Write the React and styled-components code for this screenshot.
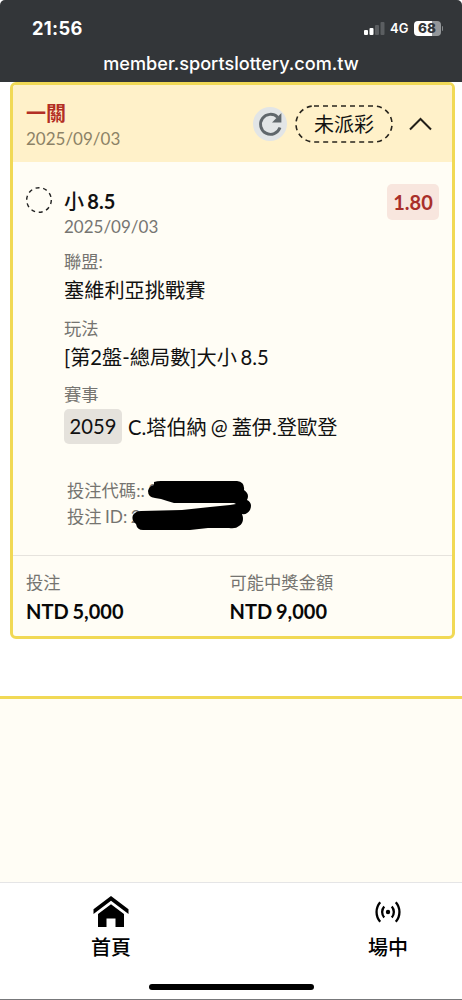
import styled, { createGlobalStyle } from "styled-components";

const GlobalStyle = createGlobalStyle`
  * {
    box-sizing: border-box;
  }
  body {
    margin: 0;
    background: #fff;
    font-family: Lato, "Noto Sans CJK TC", sans-serif;
    color: #111;
  }
`;

const Page = styled.div`
  width: 462px;
  height: 1000px;
  display: flex;
  flex-direction: column;
  overflow: hidden;
  background: #fff;
`;

const BrowserTop = styled.header`
  height: 82px;
  flex: none;
  padding-top: 16px;
  background: #333639;
  color: #fff;
  border-radius: 5px 5px 0 0;
  font-family: Inter, sans-serif;
`;

const StatusRow = styled.div`
  display: flex;
  align-items: center;
  justify-content: space-between;
  height: 24px;
  padding: 0 19px 0 32px;
`;

const Clock = styled.span`
  font-size: 18.3px;
  font-weight: 700;
  letter-spacing: 0.3px;
`;

const StatusIcons = styled.div`
  display: flex;
  align-items: center;
  gap: 5px;
  font-size: 13px;
  font-weight: 600;
`;

const Battery = styled.div`
  display: flex;
  align-items: center;
  gap: 1px;
  .cell {
    width: 27px;
    height: 15px;
    border-radius: 4px;
    background: linear-gradient(90deg, #fff 68%, #94979a 68%);
    color: #333639;
    font-size: 13.5px;
    font-weight: 800;
    line-height: 15px;
    text-align: center;
  }
  .tip {
    width: 1.5px;
    height: 5px;
    border-radius: 0 2px 2px 0;
    background: #85888a;
  }
`;

const Address = styled.div`
  height: 44px;
  line-height: 46px;
  text-align: center;
  font-size: 18.1px;
  font-weight: 500;
`;

const Card = styled.section`
  height: 557px;
  flex: none;
  margin: 0 7px 0 10px;
  border: 3px solid #f1d955;
  border-radius: 6px;
  background: #fffdf5;
  display: flex;
  flex-direction: column;
`;

const CardHeader = styled.div`
  height: 77px;
  padding: 15px 20px 0 13px;
  display: flex;
  justify-content: space-between;
  background: #fff1c9;
  border-radius: 3px 3px 0 0;
`;

const Title = styled.div`
  font-size: 20px;
  line-height: 26px;
  font-weight: 700;
  word-spacing: -1.5px;
  color: ${(p) => p.$color || "#111"};
  .size {
    font-weight: 500;
  }
`;

const DateText = styled.div`
  font-size: 17px;
  line-height: 26px;
  color: ${(p) => p.$color || "#767572"};
`;

const HeaderActions = styled.div`
  display: flex;
  align-items: center;
  height: 48px;
`;

const RefreshButton = styled.span`
  width: 34px;
  height: 34px;
  border-radius: 50%;
  background: #e2e5e6;
  display: flex;
  align-items: center;
  justify-content: center;
  margin-right: 8px;
`;

const StatusPill = styled.span`
  position: relative;
  width: 98px;
  height: 38px;
  line-height: 39px;
  text-align: center;
  font-size: 20px;
  margin-right: 16px;
  svg {
    position: absolute;
    inset: 0;
  }
`;

const Selection = styled.div`
  height: 393px;
  padding: 24px 13px 0;
  display: grid;
  grid-template-columns: 38px 1fr auto;
  align-items: start;
`;

const SelectionName = styled.div`
  padding-top: 2px;
`;

const Odds = styled.div`
  width: 52px;
  height: 36px;
  margin-top: -2px;
  border-radius: 5px;
  background: #f8e6de;
  color: #a92f2a;
  font-size: 20px;
  font-weight: 700;
  line-height: 37px;
  text-align: center;
`;

const Field = styled.div`
  margin-top: ${(p) => p.$top}px;
  white-space: nowrap;
`;

const Label = styled.div`
  font-size: 17.3px;
  line-height: ${(p) => p.$line || 29}px;
  word-spacing: -1px;
  color: #757470;
`;

const Value = styled.div`
  font-size: 20.2px;
  line-height: 28px;
  word-spacing: -1.5px;
`;

const MatchRow = styled.div`
  display: flex;
  align-items: center;
  gap: 6px;
  height: 35px;
  font-size: 20.2px;
  word-spacing: -1.2px;
`;

const MatchCode = styled.span`
  width: 58px;
  height: 35px;
  border-radius: 5px;
  background: #e5e2dc;
  line-height: 35px;
  text-align: center;
`;

const SlipCodes = styled.div`
  position: relative;
  margin: 34px 0 0 3px;
  svg {
    position: absolute;
    left: 63px;
    top: 1px;
  }
`;

const Totals = styled.div`
  border-top: 1px solid #e6e3dd;
  padding: 12px 13px 0;
  display: grid;
  grid-template-columns: 203.5px 1fr;
`;

const Amount = styled.div`
  font-size: 20px;
  line-height: 28px;
  font-weight: 700;
  word-spacing: -1px;
  color: #080808;
`;

const NextPanel = styled.div`
  flex: 1;
  margin-top: 57px;
  border-top: 3px solid #f1d955;
  background: #fffdf5;
`;

const TabBar = styled.nav`
  height: 118px;
  flex: none;
  border-top: 1px solid #e5e5e6;
  border-bottom: 1px solid #77787a;
  background: #fff;
  display: flex;
  flex-direction: column;
  align-items: center;
  justify-content: space-between;
  padding-bottom: 9px;
`;

const Tabs = styled.div`
  align-self: stretch;
  display: flex;
  justify-content: space-between;
  padding: 11px 54px 0 91px;
`;

const Tab = styled.div`
  width: 40px;
  display: flex;
  flex-direction: column;
  align-items: center;
  font-size: 20px;
  font-weight: 500;
  line-height: 30px;
  color: #000;
  svg {
    height: 36px;
    margin-bottom: 2px;
  }
`;

const HomeIndicator = styled.div`
  width: 165px;
  height: 6px;
  border-radius: 3px;
  background: #000;
`;

function SignalIcon() {
  return (
    <svg width="21" height="13" viewBox="0 0 21 13">
      <rect x="0" y="8" width="4" height="5" rx="1" fill="#fff" />
      <rect x="5.5" y="6" width="4" height="7" rx="1" fill="#fff" />
      <rect x="11" y="3" width="4" height="10" rx="1" fill="#5b5e61" />
      <rect x="16.5" y="0" width="4" height="13" rx="1" fill="#5b5e61" />
    </svg>
  );
}

function RefreshIcon() {
  return (
    <svg width="26" height="26" viewBox="0 0 26 26" fill="none">
      <path d="M23 16.6A10 10 0 1 1 20.6 6.2" stroke="#60676b" strokeWidth="2.9" />
      <path d="M24.4 2v9.4H15z" fill="#60676b" />
    </svg>
  );
}

function HomeIcon() {
  return (
    <svg width="36" height="36" viewBox="0 0 36 36" fill="#000">
      <path d="M18 2 35.5 15.3v4.8L18 6.8.5 20.1v-4.8z" />
      <path d="M18 10.2 31 20v13H22.5v-8.5h-9V33H5V20z" />
    </svg>
  );
}

function LiveIcon() {
  return (
    <svg width="28" height="36" viewBox="0 0 28 36" fill="none" stroke="#000" strokeWidth="2.3">
      <path d="M6.2 8.2a15 15 0 0 0 0 19.6M21.8 8.2a15 15 0 0 1 0 19.6" />
      <path d="M10.2 12.5a8.4 8.4 0 0 0 0 11M17.8 12.5a8.4 8.4 0 0 1 0 11" />
      <circle cx="14" cy="18" r="2.2" fill="#000" stroke="none" />
    </svg>
  );
}

// marker strokes hiding the slip numbers
function Scribble() {
  return (
    <svg width="124" height="52" viewBox="0 0 124 52">
      <path d="M24 3Q27 2 31 2H107Q115 3 114 11Q120 15 117 21Q123 24 120 31Q117 36 112 35Q115 43 109 47Q106 50 99 49L78 49L60 51H13Q7 51 6 45Q1 41 3 36Q6 32 11 32L52 31L80 28L100 26L106 25L104 24L44 24Q37 22 31 20L25 19Q18 18 18 12Q19 7 24 6Z" />
    </svg>
  );
}

export default function App() {
  return (
    <>
      <GlobalStyle />
      <Page>
        <BrowserTop>
          <StatusRow>
            <Clock>21:56</Clock>
            <StatusIcons>
              <SignalIcon />
              <span>4G</span>
              <Battery>
                <div className="cell">68</div>
                <div className="tip" />
              </Battery>
            </StatusIcons>
          </StatusRow>
          <Address>member.sportslottery.com.tw</Address>
        </BrowserTop>

        <Card>
          <CardHeader>
            <div>
              <Title $color="#b32f25">一關</Title>
              <DateText $color="#8c8266">2025/09/03</DateText>
            </div>
            <HeaderActions>
              <RefreshButton>
                <RefreshIcon />
              </RefreshButton>
              <StatusPill>
                <svg width="98" height="38" fill="none">
                  <rect x="1" y="1" width="96" height="36" rx="18" stroke="#28251d" strokeWidth="1.6" strokeDasharray="5 4" />
                </svg>
                未派彩
              </StatusPill>
              <svg width="23" height="14" viewBox="0 0 23 14" fill="none">
                <path d="M1 12.5 11.5 2 22 12.5" stroke="#211e17" strokeWidth="2" />
              </svg>
            </HeaderActions>
          </CardHeader>

          <Selection>
            <svg width="26" height="28" fill="none">
              <circle cx="13" cy="14" r="12.3" stroke="#222" strokeWidth="1.4" strokeDasharray="4 3.73" />
            </svg>
            <div>
              <SelectionName>
                <Title>
                  <span className="size">小</span> 8.5
                </Title>
                <DateText>2025/09/03</DateText>
              </SelectionName>
              <Field $top={7}>
                <Label>聯盟:</Label>
                <Value>塞維利亞挑戰賽</Value>
              </Field>
              <Field $top={9.5}>
                <Label>玩法</Label>
                <Value>[第2盤-總局數]大小 8.5</Value>
              </Field>
              <Field $top={9.5}>
                <Label>賽事</Label>
                <MatchRow>
                  <MatchCode>2059</MatchCode>
                  <span>C.塔伯納 @ 蓋伊.登歐登</span>
                </MatchRow>
              </Field>
              <SlipCodes>
                <Label $line={26}>投注代碼:: 8</Label>
                <Label $line={26}>投注 ID: 2</Label>
                <Scribble />
              </SlipCodes>
            </div>
            <Odds>1.80</Odds>
          </Selection>

          <Totals>
            <div>
              <Label>投注</Label>
              <Amount>NTD 5,000</Amount>
            </div>
            <div>
              <Label>可能中獎金額</Label>
              <Amount>NTD 9,000</Amount>
            </div>
          </Totals>
        </Card>

        <NextPanel />

        <TabBar>
          <Tabs>
            <Tab>
              <HomeIcon />
              首頁
            </Tab>
            <Tab>
              <LiveIcon />
              場中
            </Tab>
          </Tabs>
          <HomeIndicator />
        </TabBar>
      </Page>
    </>
  );
}
